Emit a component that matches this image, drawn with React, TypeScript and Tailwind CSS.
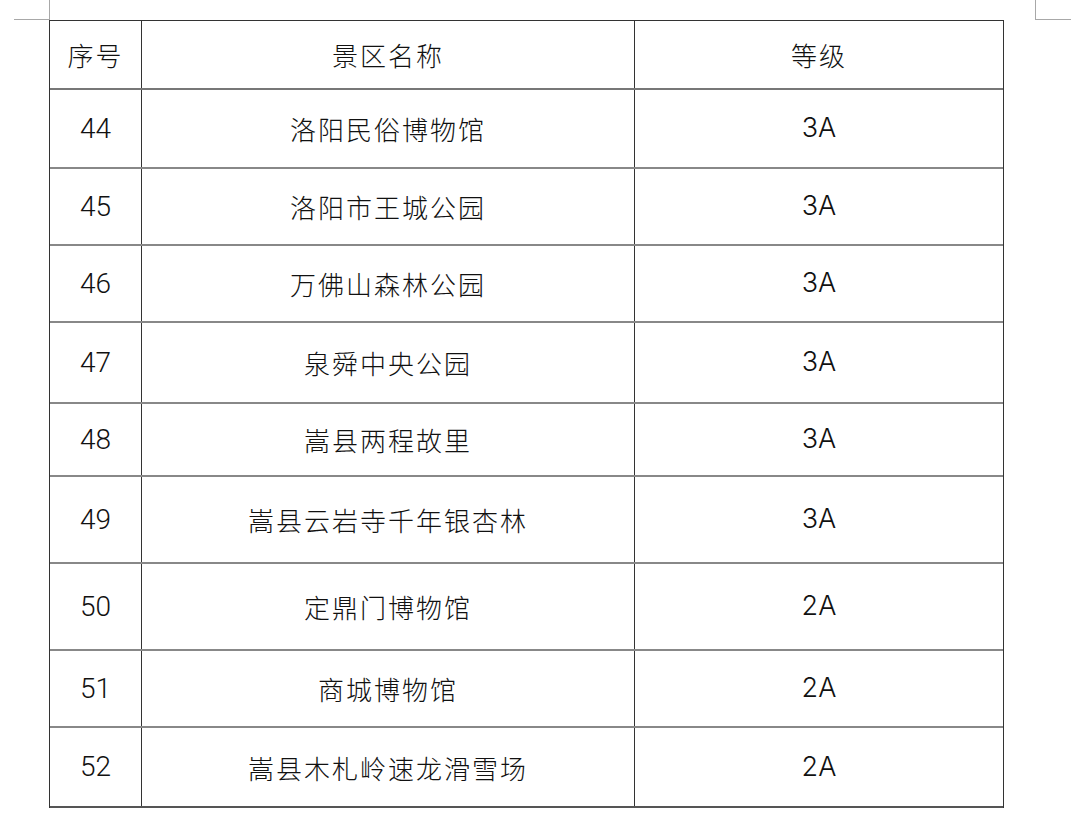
import React from 'react';

const rows = [
  { no: '44', name: '洛阳民俗博物馆', level: '3A', h: 79 },
  { no: '45', name: '洛阳市王城公园', level: '3A', h: 77 },
  { no: '46', name: '万佛山森林公园', level: '3A', h: 77 },
  { no: '47', name: '泉舜中央公园', level: '3A', h: 81 },
  { no: '48', name: '嵩县两程故里', level: '3A', h: 73 },
  { no: '49', name: '嵩县云岩寺千年银杏林', level: '3A', h: 87 },
  { no: '50', name: '定鼎门博物馆', level: '2A', h: 87 },
  { no: '51', name: '商城博物馆', level: '2A', h: 77 },
  { no: '52', name: '嵩县木札岭速龙滑雪场', level: '2A', h: 80 },
];

const cjk = "font-['Noto_Sans_CJK_SC',sans-serif] text-[26px] tracking-[2px] font-light";
const latin = "font-['Roboto','Inter',sans-serif] text-[28px] font-light";

export default function App() {
  return (
    <div className="w-[1080px] h-[825px] bg-white text-[#111] overflow-hidden">
      {/* crop marks */}
      <div className="flex h-[20px]">
        <div className="w-[14px]" />
        <div className="w-[36px] h-[20px] border-b border-r border-[#a8a8a8]" />
        <div className="w-[985px]" />
        <div className="w-[36px] h-[20px] border-b border-l border-[#a8a8a8]" />
      </div>

      {/* table */}
      <div className="ml-[49px] w-[955px] border-t-[1.5px] border-l-[1.5px] border-r-[1.5px] border-[#333]">
        <div className="grid grid-cols-[92px_493px_1fr] h-[69px] border-b-2 border-[#777]">
          <div className={`flex items-center justify-center border-r-[1.5px] border-[#333] ${cjk}`}>序号</div>
          <div className={`flex items-center justify-center border-r-[1.5px] border-[#333] ${cjk}`}>景区名称</div>
          <div className={`flex items-center justify-center ${cjk}`}>等级</div>
        </div>
        {rows.map((r, i) => (
          <div
            key={r.no}
            className={`grid grid-cols-[92px_493px_1fr] border-b-2 ${i === rows.length - 1 ? 'border-[#555]' : 'border-[#888]'}`}
            style={{ height: r.h }}
          >
            <div className={`flex items-center justify-center border-r-[1.5px] border-[#333] ${latin}`}>{r.no}</div>
            <div className={`flex items-center justify-center border-r-[1.5px] border-[#333] ${cjk}`}>{r.name}</div>
            <div className="flex items-center justify-center font-['Inter',sans-serif] text-[27px] font-light">{r.level}</div>
          </div>
        ))}
      </div>
    </div>
  );
}
